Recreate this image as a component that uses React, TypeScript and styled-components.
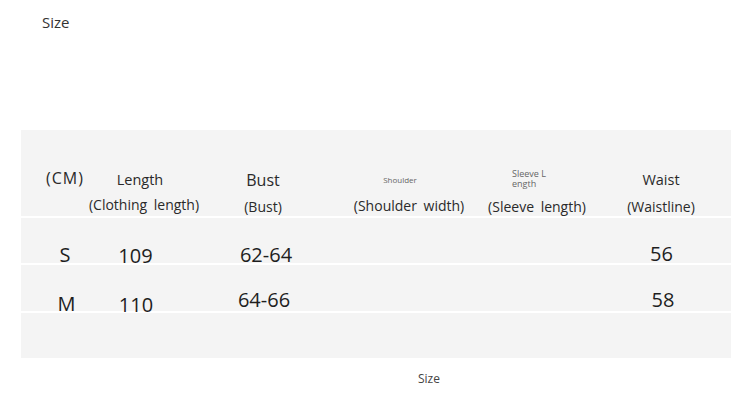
import React from "react";
import styled, { createGlobalStyle } from "styled-components";

const Global = createGlobalStyle`
  html, body { margin: 0; padding: 0; background: #ffffff; }
  body { font-family: "Open Sans", "Noto Sans", "Liberation Sans", sans-serif; color: #222; }
`;

const Page = styled.div`
  width: 750px;
  height: 404px;
  display: flex;
  flex-direction: column;
  overflow: hidden;
`;

const Title = styled.div`
  padding: 12px 0 0 42px;
  height: 20px;
  font-size: 15px;
  line-height: 21px;
  color: #333;
`;

const Panel = styled.div`
  margin: 98px 0 0 21px;
  width: 710px;
  display: flex;
  flex-direction: column;
  gap: 2px;
`;

const Row = styled.div<{ $h: number }>`
  height: ${(p) => p.$h}px;
  background: #f4f4f4;
  display: grid;
  grid-template-columns: 88px 70px 168px 124px 132px 116px 1fr;
`;

const Cell = styled.div<{ $dy?: number }>`
  display: flex;
  flex-direction: column;
  align-items: center;
  padding-top: ${(p) => p.$dy ?? 0}px;
  white-space: nowrap;
`;

const Head = styled.div<{ $size?: number; $top: number; $shift?: number; $ls?: number }>`
  margin-top: ${(p) => p.$top}px;
  margin-right: ${(p) => (p.$shift ?? 0) * 2}px;
  font-size: ${(p) => p.$size ?? 14.5}px;
  letter-spacing: ${(p) => p.$ls ?? 0}px;
  line-height: 20px;
  color: #2a2a2a;
  height: 20px;
`;

const Sub = styled.div<{ $top: number }>`
  margin-top: ${(p) => p.$top}px;
  font-size: 14px;
  line-height: 18px;
  height: 18px;
  color: #2a2a2a;
  word-spacing: 3px;
`;

const Tiny = styled.div<{ $top: number; $shift: number }>`
  margin-top: ${(p) => p.$top}px;
  margin-right: ${(p) => p.$shift * 2}px;
  font-size: 8px;
  line-height: 10px;
  height: 10px;
  color: #666;
`;

const TinyBlock = styled.div<{ $top: number; $shift: number }>`
  margin-top: ${(p) => p.$top}px;
  margin-right: ${(p) => p.$shift * 2}px;
  font-size: 9px;
  line-height: 10px;
  height: 20px;
  color: #666;
  white-space: pre;
  text-align: left;
`;

const Value = styled.div<{ $dx: number }>`
  margin-left: ${(p) => p.$dx * 2}px;
  font-size: 20px;
  line-height: 20px;
  height: 20px;
  color: #1e1e1e;
`;

const Caption = styled.div`
  padding: 13px 0 0 418px;
  font-size: 12px;
  line-height: 16px;
  color: #444;
`;

type Val = { text: string; dy: number; dx: number };
type RowData = { key: string; h: number; cells: (Val | null)[] };

const rows: RowData[] = [
  {
    key: "S",
    h: 45,
    cells: [
      { text: "S", dy: 27, dx: 0 },
      { text: "109", dy: 28, dx: -8.5 },
      { text: "62-64", dy: 27, dx: 3 },
      null,
      null,
      { text: "56", dy: 26, dx: 0.5 },
    ],
  },
  {
    key: "M",
    h: 46,
    cells: [
      { text: "M", dy: 29, dx: 1.5 },
      { text: "110", dy: 30, dx: -8 },
      { text: "64-66", dy: 25, dx: 1 },
      null,
      null,
      { text: "58", dy: 25, dx: 2 },
    ],
  },
];

export default function App() {
  return (
    <>
      <Global />
      <Page>
        <Title>Size</Title>
        <Panel>
          <Row $h={86}>
            <Cell>
              <Head $top={38} $size={16} $ls={1}>(CM)</Head>
            </Cell>
            <Cell>
              <Head $top={40} $shift={4}>Length</Head>
              <Sub $top={6}>(Clothing length)</Sub>
            </Cell>
            <Cell>
              <Head $top={40} $size={16}>Bust</Head>
              <Sub $top={8}>(Bust)</Sub>
            </Cell>
            <Cell>
              <Tiny $top={45} $shift={9}>Shoulder</Tiny>
              <Sub $top={12}>(Shoulder width)</Sub>
            </Cell>
            <Cell>
              <TinyBlock $top={39} $shift={8}>{"Sleeve L\nength"}</TinyBlock>
              <Sub $top={9}>(Sleeve length)</Sub>
            </Cell>
            <Cell>
              <Head $top={40}>Waist</Head>
              <Sub $top={8}>(Waistline)</Sub>
            </Cell>
            <Cell />
          </Row>
          {rows.map((r) => (
            <Row $h={r.h} key={r.key}>
              {r.cells.map((c, i) =>
                c ? (
                  <Cell $dy={c.dy} key={i}>
                    <Value $dx={c.dx}>{c.text}</Value>
                  </Cell>
                ) : (
                  <Cell key={i} />
                )
              )}
              <Cell />
            </Row>
          ))}
          <Row $h={45} />
        </Panel>
        <Caption>Size</Caption>
      </Page>
    </>
  );
}
